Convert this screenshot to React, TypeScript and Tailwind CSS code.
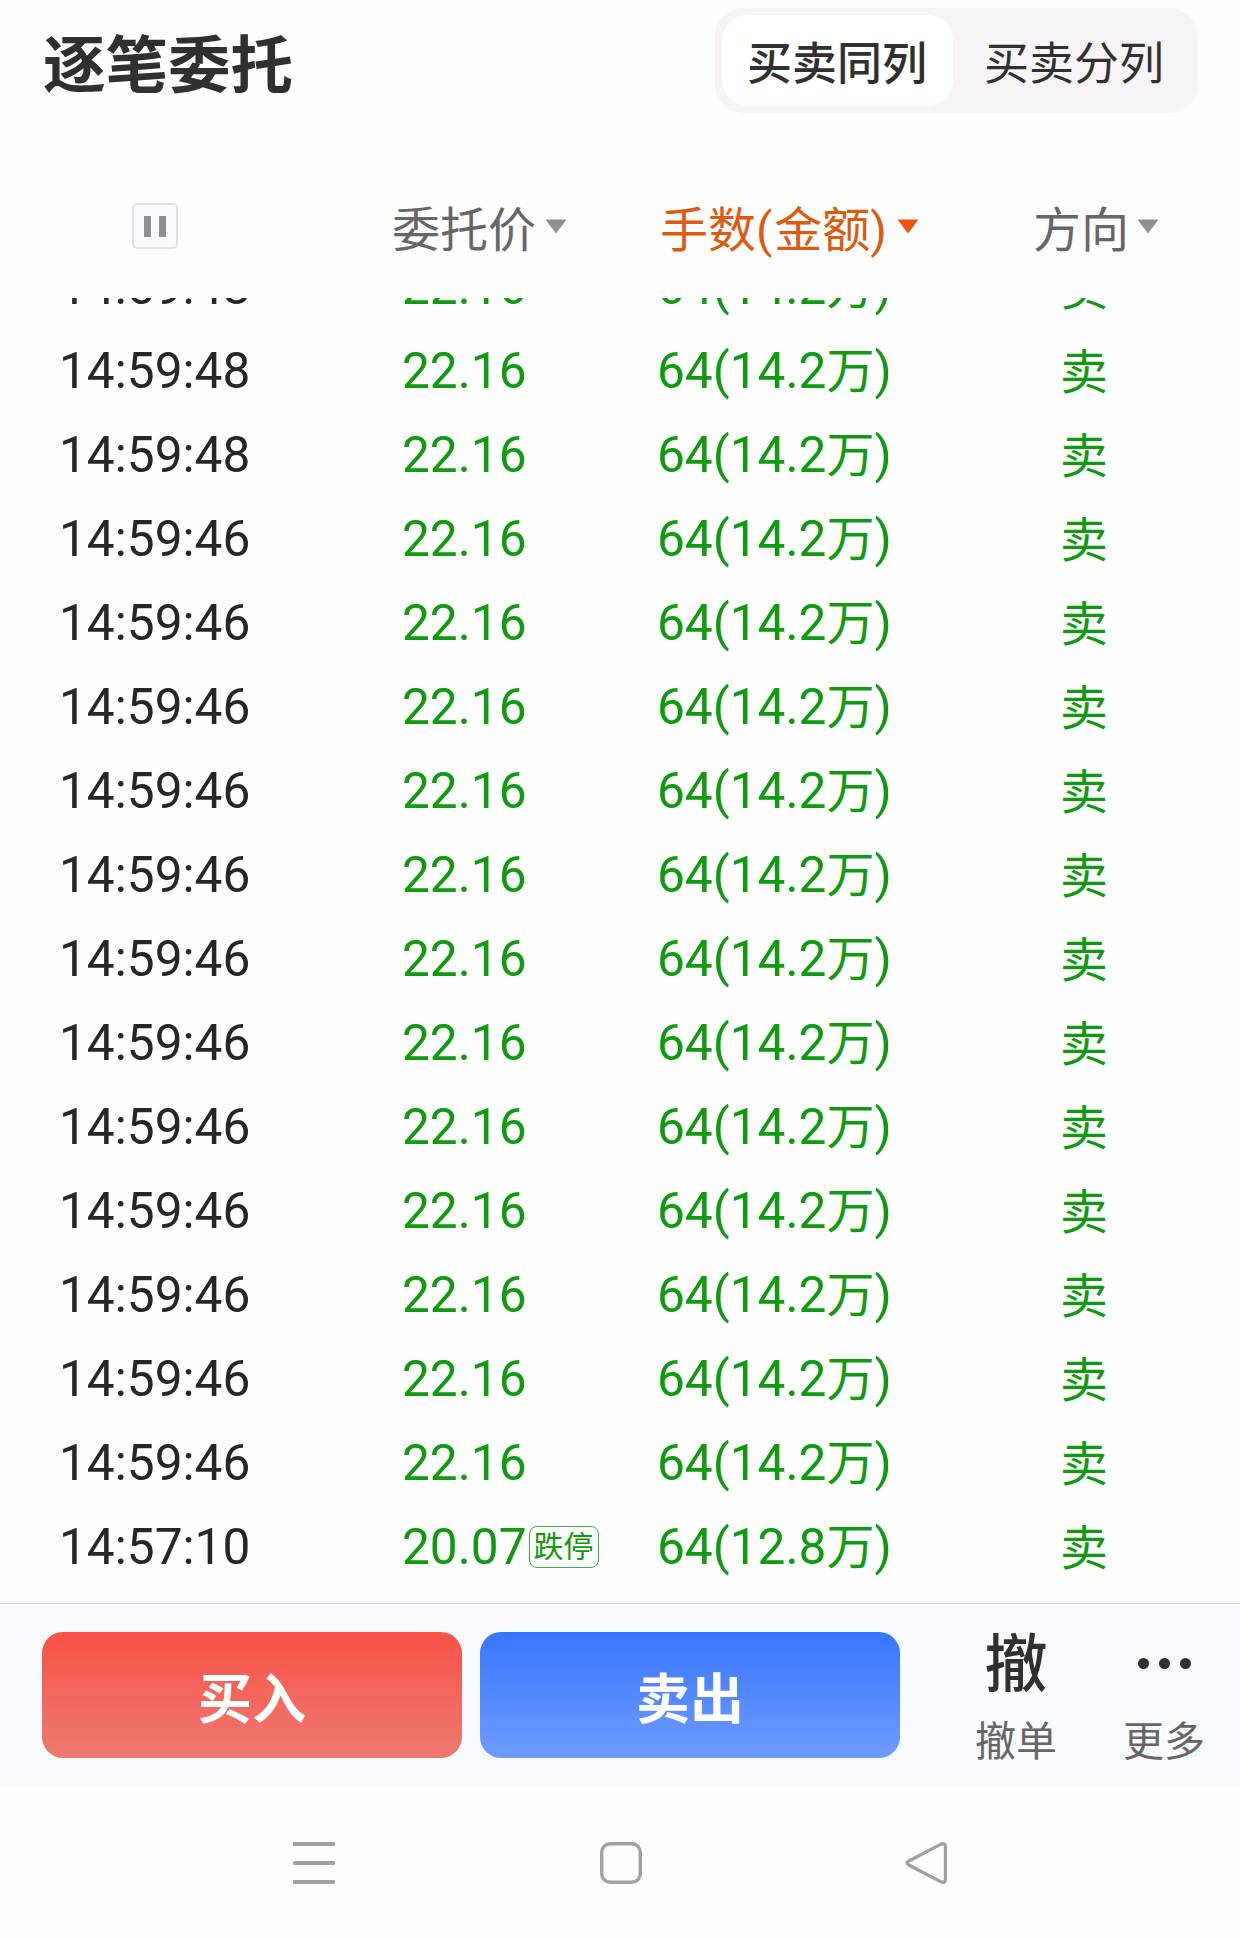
import React from "react";

type Order = { time: string; price: string; lots: string; limit?: string };

const orders: Order[] = [
  ...Array.from({ length: 3 }, () => ({ time: "14:59:48", price: "22.16", lots: "64(14.2万)" })),
  ...Array.from({ length: 12 }, () => ({ time: "14:59:46", price: "22.16", lots: "64(14.2万)" })),
  { time: "14:57:10", price: "20.07", lots: "64(12.8万)", limit: "跌停" },
];

function Caret({ className }: { className: string }) {
  return (
    <svg width="22" height="15" viewBox="0 0 22 15" className={className}>
      <path d="M0.5 0.5H21.5L11 14.5Z" fill="currentColor" />
    </svg>
  );
}

function Header() {
  return (
    <header className="flex h-[113px] items-start justify-between pl-[43px] pr-[42px] pt-2">
      <h1 className="h-[105px] text-[62.5px] font-bold leading-[118px] text-[#303030]">逐笔委托</h1>
      <div className="flex h-[105px] w-[483px] rounded-[28px] bg-[#f7f3f7] p-[7px] text-[45px] leading-[60px] text-[#303030]">
        <button className="h-[91px] w-[231px] rounded-[26px] bg-white pr-px pt-[8px] text-center font-medium">买卖同列</button>
        <button className="h-[91px] flex-1 pl-[4px] pt-[8px] text-center font-normal">买卖分列</button>
      </div>
    </header>
  );
}

function ColumnHeads() {
  return (
    <div className="flex h-[185px] pt-[87px] text-[48px] leading-[62px] text-[#666666]">
      <div className="w-[392px] pl-[132px] pt-[3px]">
        <div className="flex h-[46px] w-[46px] items-center justify-center gap-[8px] rounded-[5px] border-2 border-[#dfe1e8] bg-[#f7faff]">
          <span className="h-[21px] w-[7px] bg-[#8e8f94]" />
          <span className="h-[21px] w-[7px] bg-[#8e8f94]" />
        </div>
      </div>
      <div className="flex w-[268px]">
        委托价
        <Caret className="ml-[9px] mt-[19px] text-[#8e9096]" />
      </div>
      <div className="flex w-[373px] text-[#de5a10]">
        手数<span className="tracking-[1.8px]">(</span>金额<span className="tracking-[1.8px]">)</span>
        <Caret className="ml-[8px] mt-[19px] text-[#ea560a]" />
      </div>
      <div className="flex">
        方向
        <Caret className="ml-[8px] mt-[19px] text-[#8e9096]" />
      </div>
    </div>
  );
}

function OrderRow({ order }: { order: Order }) {
  return (
    <li className="flex h-[84px] shrink-0 items-center pl-[59px] text-[49.6px] leading-[84px] text-[#0f9a0f] first:-mt-[53px]">
      <span className="w-[343px] text-[#262626]">{order.time}</span>
      <span className="flex w-[255px] items-center">
        {order.price}
        {order.limit && (
          <span className="ml-[2px] flex h-[42px] w-[70px] items-center justify-center rounded-[8px] border border-[#3fae3f] text-[30px] leading-[40px]">
            {order.limit}
          </span>
        )}
      </span>
      <span className="w-[403px]">
        {order.lots.slice(0, -2)}
        <span className="text-[48px]">万</span>)
      </span>
      <span className="pt-[4px] text-[48px]">卖</span>
    </li>
  );
}

function ActionBar() {
  return (
    <div className="flex h-[183px] border-t border-[#d0d8dc] bg-[#f7faff] pl-[42px] pt-[28px]">
      <button className="h-[126px] w-[420px] rounded-[21px] bg-gradient-to-b from-[#fa5048] to-[#ed7870] pt-[11px] text-[54px] font-bold leading-[60px] text-white">
        买入
      </button>
      <button className="ml-[18px] h-[126px] w-[420px] rounded-[21px] bg-gradient-to-b from-[#3875ff] to-[#6e9bff] pt-[11px] text-[54px] font-bold leading-[60px] text-white">
        卖出
      </button>
      <div className="ml-[59px] flex w-[114px] flex-col items-center">
        <span className="h-[75px] text-[63px] font-medium leading-[66px] text-[#303030]">撤</span>
        <span className="text-[41px] leading-[70px] text-[#666666]">撤单</span>
      </div>
      <div className="ml-[34px] flex w-[114px] flex-col items-center">
        <span className="flex h-[75px] items-start gap-[10px] pt-[26px]">
          <i className="h-[11px] w-[11px] rounded-full bg-[#303030]" />
          <i className="h-[11px] w-[11px] rounded-full bg-[#303030]" />
          <i className="h-[11px] w-[11px] rounded-full bg-[#303030]" />
        </span>
        <span className="text-[41px] leading-[70px] text-[#666666]">更多</span>
      </div>
    </div>
  );
}

function SystemNav() {
  return (
    <nav className="flex pl-[292px] pt-[55px] text-[#a0a0a0]">
      <svg width="44" height="44" viewBox="0 0 44 44" fill="currentColor">
        <rect x="1" y="1" width="42" height="4" rx="1" />
        <rect x="1" y="20" width="42" height="4" rx="1" />
        <rect x="1" y="39" width="42" height="4" rx="1" />
      </svg>
      <svg width="44" height="44" viewBox="0 0 44 44" fill="none" stroke="currentColor" strokeWidth="3.4" className="ml-[263px]">
        <rect x="2.7" y="2.7" width="38.6" height="38.6" rx="8.5" />
      </svg>
      <svg width="44" height="44" viewBox="0 0 44 44" fill="none" stroke="currentColor" strokeWidth="3.2" strokeLinejoin="round" className="ml-[262px]">
        <path d="M36 3.2Q40.4 1.2 40.4 6V38Q40.4 42.8 36 40.8L3.8 24Q0.4 22 3.8 20Z" />
      </svg>
    </nav>
  );
}

export default function App() {
  return (
    <main className="h-[1940px] w-[1240px] overflow-hidden bg-[#fefefe] font-['Roboto','Noto_Sans_CJK_SC',sans-serif]">
      <Header />
      <ColumnHeads />
      <ul className="flex h-[1305px] flex-col overflow-hidden">
        {orders.map((order, i) => (
          <OrderRow key={i} order={order} />
        ))}
      </ul>
      <ActionBar />
      <SystemNav />
    </main>
  );
}
